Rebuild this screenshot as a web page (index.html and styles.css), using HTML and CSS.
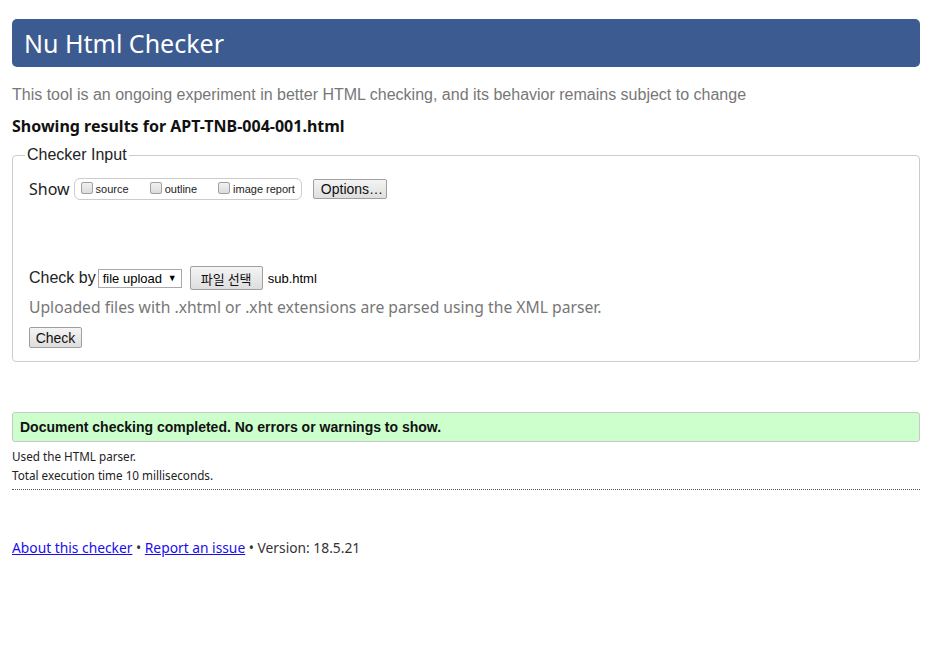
FILE: index.html
```html
<!DOCTYPE html>
<html lang="en">
<head>
<meta charset="utf-8">
<title>Nu Html Checker</title>
<link rel="stylesheet" href="styles.css">
</head>
<body>
<div class="page">
  <h1 class="title">Nu Html Checker</h1>
  <p class="intro">This tool is an ongoing experiment in better HTML checking, and its behavior remains subject to change</p>
  <p class="showing">Showing results for APT-TNB-004-001.html</p>
  <fieldset class="checker">
    <legend class="legend">Checker Input</legend>
    <div class="show-row">
      <span class="show-label">Show</span>
      <span class="opts">
        <label class="opt"><input type="checkbox" class="cb"><span>source</span></label>
        <label class="opt"><input type="checkbox" class="cb"><span>outline</span></label>
        <label class="opt"><input type="checkbox" class="cb"><span>image report</span></label>
      </span>
      <button class="btn btn-options" type="button">Options…</button>
    </div>
    <div class="by-row">
      <span class="by-label">Check by</span>
      <span class="select"><span>file upload</span><span class="arrow">▼</span></span>
      <button class="btn btn-file" type="button">파일 선택</button>
      <span class="filename">sub.html</span>
    </div>
    <p class="note">Uploaded files with .xhtml or .xht extensions are parsed using the XML parser.</p>
    <button class="btn btn-check" type="button">Check</button>
  </fieldset>
  <div class="success">Document checking completed. No errors or warnings to show.</div>
  <div class="details">
    <p class="detail">Used the HTML parser.</p>
    <p class="detail">Total execution time 10 milliseconds.</p>
  </div>
  <p class="footer"><a href="#" class="link">About this checker</a> • <a href="#" class="link">Report an issue</a> • Version: 18.5.21</p>
</div>
</body>
</html>
```
FILE: styles.css
```css
html, body {
  margin: 0;
  padding: 0;
  background: #fff;
}
.page {
  padding: 19px 22px 40px 12px;
  font-family: "Liberation Sans", Arial, sans-serif;
  color: #222;
}
.title {
  margin: 0;
  height: 48px;
  line-height: 48px;
  padding-left: 12px;
  background: #3c5b91;
  color: #fff;
  font-family: "Noto Sans", sans-serif;
  font-weight: normal;
  font-size: 25px;
  border-radius: 5px;
}
.intro {
  margin: 18px 0 0;
  font-size: 16px;
  line-height: 19px;
  color: #777;
}
.showing {
  margin: 12px 0 0;
  font-family: "Noto Sans", sans-serif;
  font-weight: bold;
  font-size: 16px;
  line-height: 20px;
  color: #111;
}
.checker {
  margin: 10px 0 0;
  padding: 13px 16px 13px;
  border: 1px solid #ccc;
  border-radius: 4px;
  min-width: 0;
}
.legend {
  margin-left: -4px;
  padding: 0 2px;
  font-size: 16px;
  line-height: 18px;
  color: #222;
}
.show-row {
  display: flex;
  align-items: center;
  height: 24px;
}
.show-label {
  font-family: "Noto Sans", sans-serif;
  font-size: 16px;
  color: #222;
  margin-right: 4px;
}
.opts {
  display: flex;
  align-items: center;
  height: 20px;
  border: 1px solid #ccc;
  border-radius: 6px;
  padding: 0 6px 0 6px;
}
.opt {
  display: flex;
  align-items: center;
  font-size: 11px;
  margin-right: 21px;
  color: #222;
}
.opt:last-child {
  margin-right: 0;
}
.cb {
  appearance: none;
  -webkit-appearance: none;
  width: 12px;
  height: 12px;
  margin: -3px 3px 0 0;
  border: 1px solid #a0a0a0;
  border-radius: 2px;
  background: linear-gradient(#f0f0f0, #dcdcdc);
}
.btn {
  font-family: "Liberation Sans", Arial, sans-serif;
  font-size: 14px;
  color: #111;
  background: linear-gradient(#f4f4f4, #dedede);
  border: 1px solid #9f9f9f;
  border-radius: 2px;
  padding: 0 7px;
  cursor: default;
}
.btn-options {
  margin-left: 11px;
  height: 20px;
  line-height: 18px;
  width: 74px;
}
.by-row {
  display: flex;
  align-items: center;
  margin-top: 65px;
  height: 24px;
}
.by-label {
  font-size: 16px;
  color: #222;
  margin-right: 2px;
}
.select {
  display: inline-flex;
  align-items: center;
  justify-content: space-between;
  box-sizing: border-box;
  width: 84px;
  height: 19px;
  padding: 0 4px 0 4px;
  border: 1px solid #a9a9a9;
  background: #fff;
  font-size: 13px;
  color: #000;
}
.arrow {
  font-size: 9px;
}
.btn-file {
  margin-left: 8px;
  height: 24px;
  width: 73px;
  padding: 0;
  font-family: "Noto Sans CJK KR", sans-serif;
  font-size: 13px;
}
.filename {
  margin-left: 5px;
  font-size: 13px;
  color: #000;
}
.note {
  margin: 7px 0 0;
  font-family: "Noto Sans", sans-serif;
  font-size: 15.7px;
  line-height: 20px;
  color: #777;
}
.btn-check {
  margin-top: 10px;
  height: 21px;
  width: 53px;
  padding: 0;
  font-size: 14px;
}
.success {
  margin-top: 50px;
  height: 28px;
  line-height: 28px;
  padding-left: 7px;
  border: 1px solid #c8c8c8;
  border-radius: 3px;
  background: #ccffcc;
  font-size: 14px;
  font-weight: bold;
  color: #111;
}
.details {
  margin-top: 5px;
  padding-bottom: 4px;
  border-bottom: 1px dotted #555;
}
.detail {
  margin: 0;
  font-family: "Noto Sans", sans-serif;
  font-size: 11.7px;
  line-height: 19px;
  color: #222;
}
.footer {
  margin: 48px 0 0;
  font-family: "Noto Sans", sans-serif;
  font-size: 13.8px;
  line-height: 20px;
  color: #333;
}
.link {
  color: #1a0ded;
}
```
